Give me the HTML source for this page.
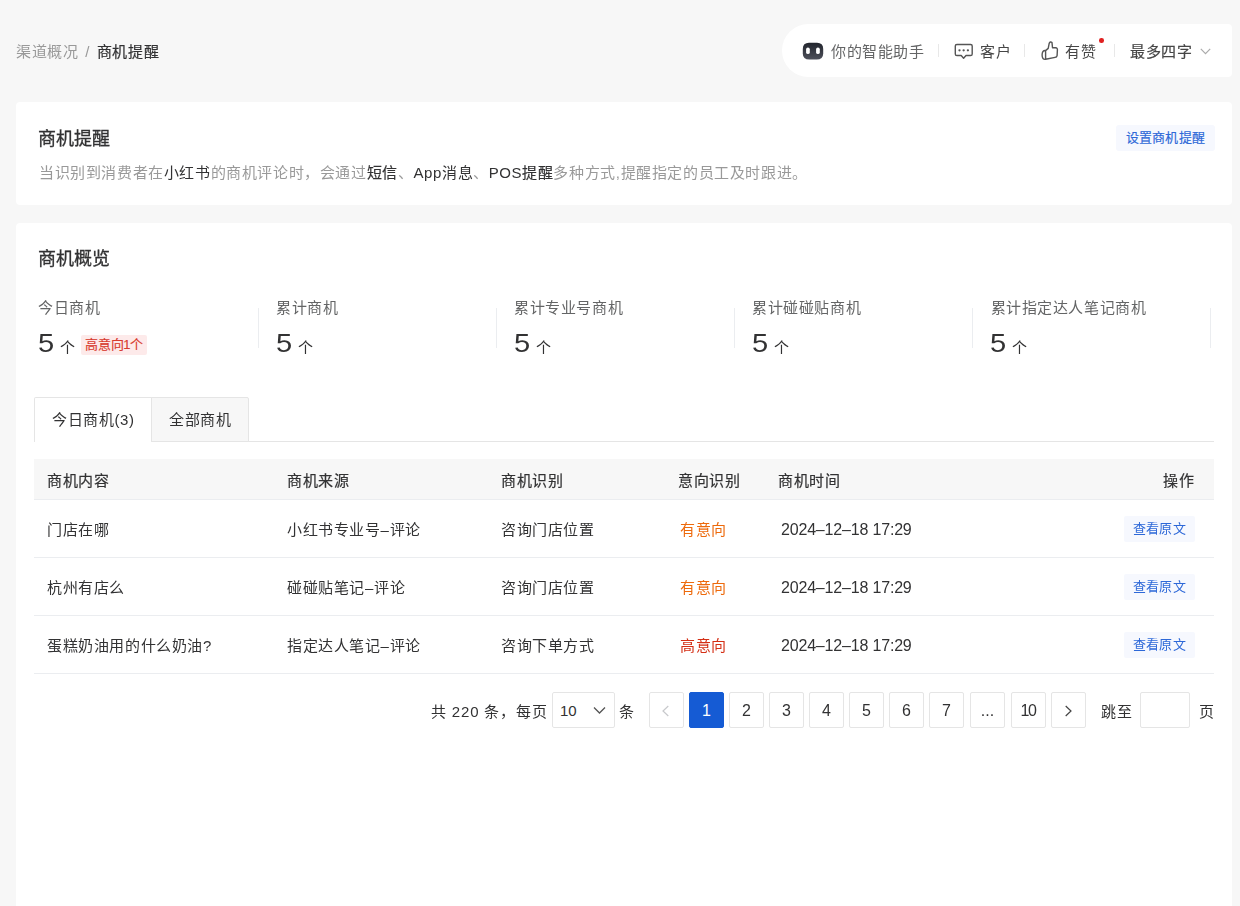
<!DOCTYPE html>
<html lang="zh-CN">
<head>
<meta charset="utf-8">
<style>
*{box-sizing:border-box;margin:0;padding:0}
html,body{width:1240px;height:906px;overflow:hidden}
body{background:#f7f7f7;font-family:"Liberation Sans",sans-serif;color:#323233;position:relative;font-size:15px;letter-spacing:0.6px;line-height:21px}
.abs{position:absolute;white-space:nowrap}
.card{position:absolute;background:#fff;border-radius:4px}
.gray{color:#999}
.dark{color:#323233}
.med{-webkit-text-stroke:0.2px currentColor}
.title{font-size:18px;letter-spacing:0;line-height:25px;color:#323233;-webkit-text-stroke:0.3px #323233}
.vsep{position:absolute;width:1px;background:#ebedf0}
.hline{position:absolute;height:1px;background:#ebedf0}
.lbl{color:#646566}
.num{display:inline-block;font-size:26.5px;letter-spacing:0;line-height:30px;color:#323233;transform:scaleX(1.1);transform-origin:0 0}
.ge{font-size:15px}
.pbtn{position:absolute;top:692px;width:35px;height:36px;border:1px solid #e5e5e5;border-radius:2px;background:#fff;text-align:center;line-height:35.5px;font-size:16px;letter-spacing:0;color:#323233}
.vbtn{position:absolute;left:1124px;width:71px;height:26px;background:#f6f8fe;border-radius:2px;color:#2d68d8;font-size:13px;letter-spacing:0.2px;line-height:26px;text-align:center}
</style>
</head>
<body>
<div id="wrap" style="position:absolute;left:0;top:0;width:1240px;height:906px;overflow:hidden;filter:blur(0.4px)">
<!-- breadcrumb -->
<div class="abs" style="left:16px;top:41px"><span class="gray">渠道概况</span><span class="gray" style="padding:0 2px 0 2px"> / </span><span class="dark med">商机提醒</span></div>

<!-- header pill -->
<div class="abs" style="left:782px;top:24px;width:450px;height:53px;background:#fff;border-radius:27px 4px 4px 27px"></div>
<svg class="abs" style="left:798px;top:37px" width="30" height="26" viewBox="0 0 30 26">
  <defs><linearGradient id="rg" x1="0" y1="0" x2="0" y2="1"><stop offset="0" stop-color="#22252d"/><stop offset="1" stop-color="#4d505a"/></linearGradient></defs>
  <path d="M11 5.7 H19 Q25.2 5.7 25.2 12 V16.4 Q25.2 22.4 18.6 22.4 H11.4 Q4.8 22.4 4.8 16.4 V12 Q4.8 5.7 11 5.7 Z" fill="url(#rg)"/>
  <rect x="8.1" y="10.4" width="3.7" height="6.6" rx="1.85" fill="#fff"/>
  <rect x="18.1" y="10.4" width="3.7" height="6.6" rx="1.85" fill="#fff"/>
</svg>
<div class="abs" style="left:831px;top:41px;color:#646566">你的智能助手</div>
<div class="vsep" style="left:938px;top:44px;height:13px;background:#e8e8e8"></div>
<svg class="abs" style="left:950px;top:38px" width="28" height="26" viewBox="0 0 28 26">
  <path d="M6.9 6.45h13.7a1.6 1.6 0 0 1 1.6 1.6v7.85a1.6 1.6 0 0 1-1.6 1.6h-4.6l-2.4 2.7-2.4-2.7H6.9a1.6 1.6 0 0 1-1.6-1.6V8.05a1.6 1.6 0 0 1 1.6-1.6z" fill="none" stroke="#555" stroke-width="1.4" stroke-linejoin="round"/>
  <circle cx="9.5" cy="12.3" r="1.15" fill="#555"/><circle cx="13.65" cy="12.3" r="1.15" fill="#555"/><circle cx="17.9" cy="12.3" r="1.15" fill="#555"/>
</svg>
<div class="abs" style="left:980px;top:41px;color:#464646">客户</div>
<div class="vsep" style="left:1024px;top:44px;height:13px;background:#e8e8e8"></div>
<svg class="abs" style="left:1036px;top:36px" width="30" height="28" viewBox="0 0 30 28">
  <path d="M9.6 14.6 L12.2 12.4 L13.2 7.4 Q14.3 5.0 16 6.6 L16.5 11.8 L19.6 11.7 Q21.6 11.9 21.4 13.9 L21.1 19.6 Q20.8 21.2 19.1 21.4 L9.6 23.3 Z M9.6 14.6 Q6.1 14.2 6.1 19 Q6.1 23.8 9.6 23.3" fill="none" stroke="#555" stroke-width="1.4" stroke-linejoin="round"/>
</svg>
<div class="abs" style="left:1065px;top:41px;color:#464646">有赞</div>
<div class="abs" style="left:1099.1px;top:38.4px;width:4.6px;height:4.6px;border-radius:50%;background:#e02020"></div>
<div class="vsep" style="left:1114px;top:44px;height:13px;background:#e8e8e8"></div>
<div class="abs med" style="left:1130px;top:41px;color:#464646">最多四字</div>
<svg class="abs" style="left:1200px;top:48px" width="11" height="7" viewBox="0 0 11 7"><path d="M0.8 0.8 L5.5 5.6 L10.2 0.8" fill="none" stroke="#aaa" stroke-width="1.2"/></svg>

<!-- card 1 -->
<div class="card" style="left:16px;top:102px;width:1216px;height:103px"></div>
<div class="abs title" style="left:38px;top:127px">商机提醒</div>
<div id="desc" class="abs gray" style="left:39px;top:161.5px">当识别到消费者在<span class="dark">小红书</span>的商机评论时，会通过<span class="dark med">短信</span>、<span class="dark">App消息</span>、<span class="dark">POS</span><span class="dark med">提醒</span>多种方式,提醒指定的员工及时跟进。</div>
<div class="abs med" style="left:1116px;top:125px;width:99px;height:26px;background:#f6f8fe;border-radius:3px;color:#2d68d8;font-size:13px;letter-spacing:0.3px;line-height:26px;text-align:center;-webkit-text-stroke:0.15px #2d68d8">设置商机提醒</div>

<!-- card 2 -->
<div class="card" style="left:16px;top:223px;width:1216px;height:700px"></div>
<div class="abs title" style="left:38px;top:247px">商机概览</div>

<!-- stats -->
<div class="abs lbl" style="left:38px;top:297px">今日商机</div>
<div class="abs lbl" style="left:276px;top:297px">累计商机</div>
<div class="abs lbl" style="left:514px;top:297px">累计专业号商机</div>
<div class="abs lbl" style="left:752px;top:297px">累计碰碰贴商机</div>
<div class="abs lbl" style="left:990.5px;top:297px">累计指定达人笔记商机</div>
<div class="vsep" style="left:258px;top:308px;height:40px"></div>
<div class="vsep" style="left:496px;top:308px;height:40px"></div>
<div class="vsep" style="left:734px;top:308px;height:40px"></div>
<div class="vsep" style="left:972px;top:308px;height:40px"></div>
<div class="vsep" style="left:1210px;top:308px;height:40px"></div>

<div class="abs" style="left:38px;top:328px"><span class="num">5</span></div>
<div class="abs" style="left:60px;top:336.7px">个</div>
<div class="abs" style="left:81px;top:335px;width:66px;height:20px;background:#fdeaea;border-radius:2px;color:#d83a2e;font-size:13px;letter-spacing:-0.3px;line-height:20px;text-align:center;-webkit-text-stroke:0.15px #d83a2e">高意向1个</div>
<div class="abs" style="left:276px;top:328px"><span class="num">5</span></div>
<div class="abs" style="left:298px;top:336.7px">个</div>
<div class="abs" style="left:514px;top:328px"><span class="num">5</span></div>
<div class="abs" style="left:536px;top:336.7px">个</div>
<div class="abs" style="left:752px;top:328px"><span class="num">5</span></div>
<div class="abs" style="left:774px;top:336.7px">个</div>
<div class="abs" style="left:990px;top:328px"><span class="num">5</span></div>
<div class="abs" style="left:1012px;top:336.7px">个</div>

<!-- tabs -->
<div class="hline" style="left:34px;top:441px;width:1180px;background:#e5e5e5"></div>
<div class="abs" style="left:34px;top:397px;width:118px;height:45px;background:#fff;border:1px solid #e5e5e5;border-bottom:none;border-radius:2px 0 0 0"></div>
<div class="abs" style="left:151px;top:397px;width:98px;height:45px;background:#f7f7f7;border:1px solid #e5e5e5;border-radius:0 2px 0 0"></div>
<div class="abs" style="left:52px;top:408.5px">今日商机(3)</div>
<div class="abs" style="left:169px;top:408.5px">全部商机</div>

<!-- table -->
<div class="abs" style="left:34px;top:459px;width:1180px;height:40px;background:#f7f7f7"></div>
<div class="hline" style="left:34px;top:499px;width:1180px"></div>
<div class="hline" style="left:34px;top:557px;width:1180px"></div>
<div class="hline" style="left:34px;top:615px;width:1180px"></div>
<div class="hline" style="left:34px;top:673px;width:1180px"></div>
<div class="med">
<div class="abs" style="left:47px;top:469.5px">商机内容</div>
<div class="abs" style="left:287px;top:469.5px">商机来源</div>
<div class="abs" style="left:501px;top:469.5px">商机识别</div>
<div class="abs" style="left:678px;top:469.5px">意向识别</div>
<div class="abs" style="left:778px;top:469.5px">商机时间</div>
<div class="abs" style="left:1163px;top:469.5px">操作</div>
</div>

<div class="abs" style="left:47px;top:519px">门店在哪</div>
<div class="abs" style="left:287px;top:519px">小红书专业号–评论</div>
<div class="abs" style="left:501px;top:519px">咨询门店位置</div>
<div class="abs" style="left:680px;top:519px;color:#ed6a0c">有意向</div>
<div class="abs" style="left:781px;top:519px;font-size:16px;letter-spacing:-0.18px">2024–12–18 17:29</div>
<div class="vbtn" style="top:516px">查看原文</div>

<div class="abs" style="left:47px;top:577px">杭州有店么</div>
<div class="abs" style="left:287px;top:577px">碰碰贴笔记–评论</div>
<div class="abs" style="left:501px;top:577px">咨询门店位置</div>
<div class="abs" style="left:680px;top:577px;color:#ed6a0c">有意向</div>
<div class="abs" style="left:781px;top:577px;font-size:16px;letter-spacing:-0.18px">2024–12–18 17:29</div>
<div class="vbtn" style="top:574px">查看原文</div>

<div class="abs" style="left:47px;top:635px">蛋糕奶油用的什么奶油?</div>
<div class="abs" style="left:287px;top:635px">指定达人笔记–评论</div>
<div class="abs" style="left:501px;top:635px">咨询下单方式</div>
<div class="abs" style="left:680px;top:635px;color:#d42f15">高意向</div>
<div class="abs" style="left:781px;top:635px;font-size:16px;letter-spacing:-0.18px">2024–12–18 17:29</div>
<div class="vbtn" style="top:632px">查看原文</div>

<!-- pagination -->
<div class="abs" style="left:431px;top:701px;letter-spacing:0.85px">共 220 条，每页</div>
<div class="abs" style="left:552px;top:692px;width:63px;height:36px;border:1px solid #e5e5e5;border-radius:2px;background:#fff"></div>
<div class="abs" style="left:560px;top:700px;letter-spacing:0;font-size:15px">10</div>
<svg class="abs" style="left:593px;top:706px" width="13" height="9" viewBox="0 0 13 9"><path d="M1 1.5 L6.5 7 L12 1.5" fill="none" stroke="#555" stroke-width="1.3"/></svg>
<div class="abs" style="left:619px;top:701px">条</div>
<div class="pbtn" style="left:649px"><svg style="position:absolute;left:10.5px;top:11.5px" width="9" height="12" viewBox="0 0 9 12"><path d="M7.3 1 L2 6 L7.3 11" fill="none" stroke="#c8c9cc" stroke-width="1.2"/></svg></div>
<div class="pbtn" style="left:689px;background:#155bd4;border-color:#155bd4;color:#fff">1</div>
<div class="pbtn" style="left:729px">2</div>
<div class="pbtn" style="left:769px">3</div>
<div class="pbtn" style="left:809px">4</div>
<div class="pbtn" style="left:849px">5</div>
<div class="pbtn" style="left:889px">6</div>
<div class="pbtn" style="left:929px">7</div>
<div class="pbtn" style="left:970px">...</div>
<div class="pbtn" style="left:1011px;letter-spacing:-1.5px;text-indent:-1px">10</div>
<div class="pbtn" style="left:1051px"><svg style="position:absolute;left:12px;top:11.5px" width="9" height="12" viewBox="0 0 9 12"><path d="M1.7 1 L7 6 L1.7 11" fill="none" stroke="#444" stroke-width="1.2"/></svg></div>
<div class="abs" style="left:1101px;top:701px">跳至</div>
<div class="abs" style="left:1140px;top:692px;width:50px;height:36px;border:1px solid #e5e5e5;border-radius:2px;background:#fff"></div>
<div class="abs" style="left:1199px;top:701px">页</div>
</div>
</body>
</html>
